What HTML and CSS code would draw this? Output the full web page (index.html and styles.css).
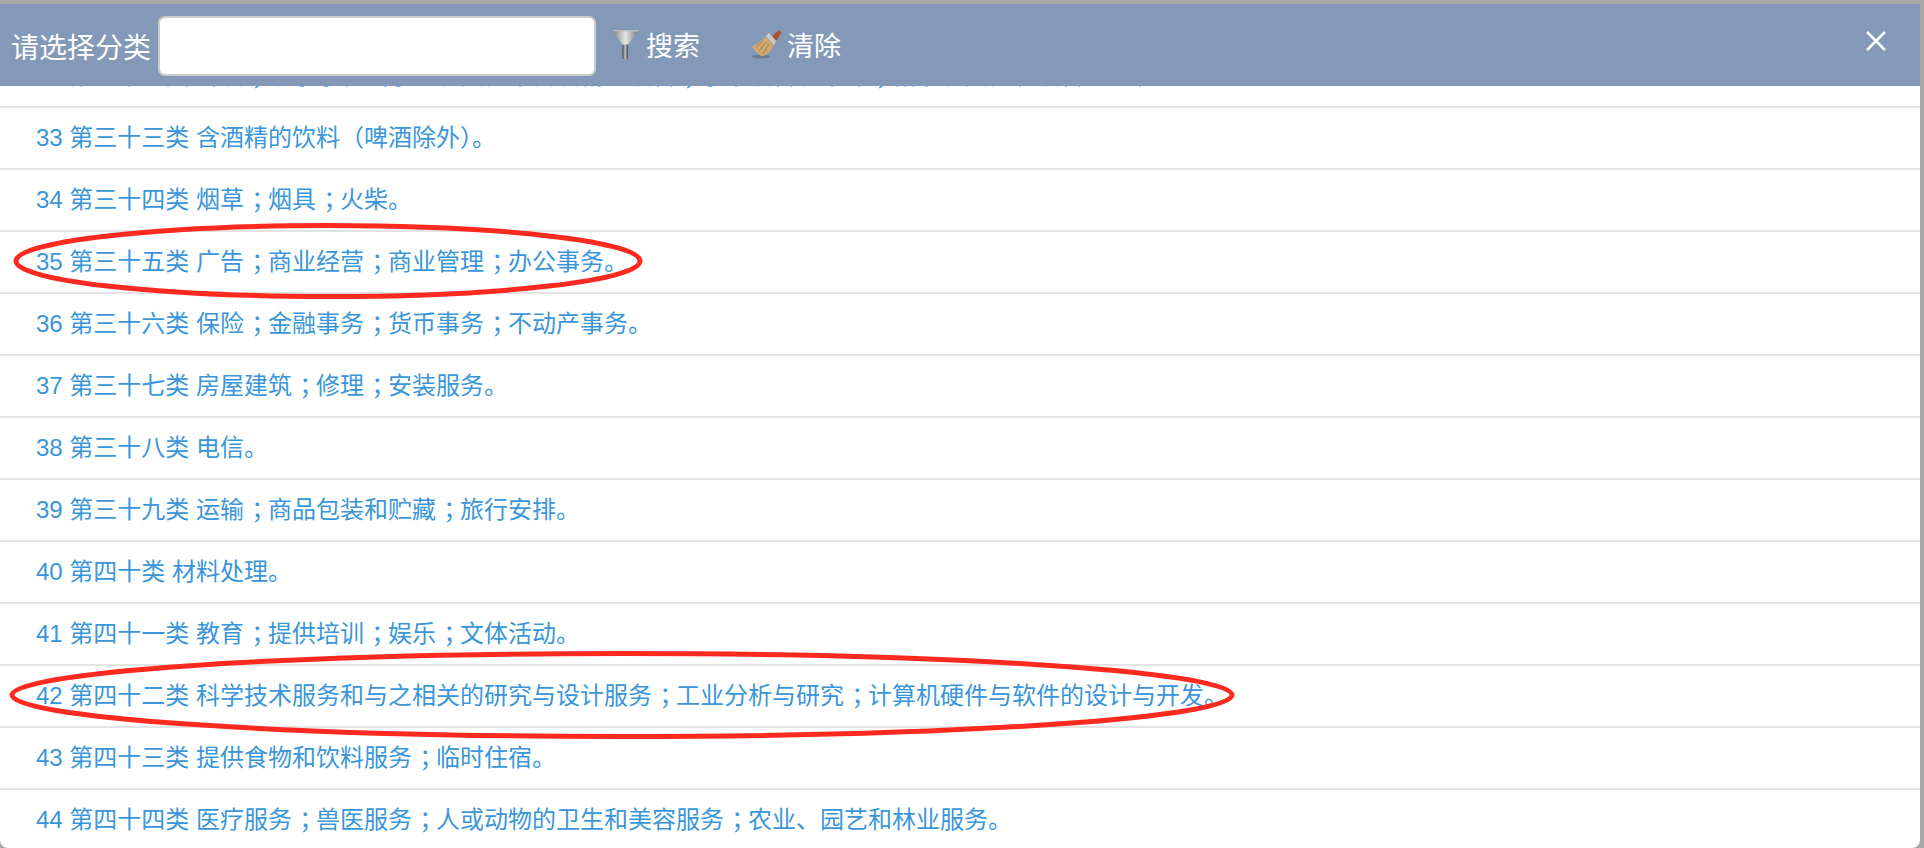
FILE: index.html
```html
<!DOCTYPE html>
<html lang="zh-CN">
<head>
    <meta charset="UTF-8">
    <title>请选择分类</title>
    <link rel="stylesheet" href="styles.css">
</head>
<body>

    <div class="modal">
        <div class="modal-header">
            <label class="search-label" for="searchBar">请选择分类</label>
            <input type="text" id="searchBar" class="search-input">
            <a class="tool-btn search-btn">
                <svg class="icon" width="28" height="31" viewBox="0 0 28 31">
                    <defs>
                        <linearGradient id="funnelTop" x1="0" y1="0" x2="1" y2="0">
                            <stop offset="0" stop-color="#7f8388"/>
                            <stop offset="0.5" stop-color="#e6e6e4"/>
                            <stop offset="1" stop-color="#787c82"/>
                        </linearGradient>
                        <linearGradient id="funnelStem" x1="0" y1="0" x2="1" y2="0">
                            <stop offset="0" stop-color="#3f444a"/>
                            <stop offset="0.5" stop-color="#c4c5c4"/>
                            <stop offset="1" stop-color="#3b4046"/>
                        </linearGradient>
                    </defs>
                    <path d="M11.500 14H17V30H11.500Z" fill="url(#funnelStem)"/>
                    <path d="M2 1.500H27L26 4L17 15.500H11.500L3 4Z" fill="url(#funnelTop)"/>
                    <path d="M2 1H27V2.500H2Z" fill="#b9bbbd"/>
                </svg>
                搜索
            </a>
            <a class="tool-btn clear-btn">
                <svg class="icon" width="33" height="29" viewBox="0 0 33 29">
                    <ellipse cx="12" cy="26.500" rx="9" ry="1.800" fill="#4d5a70" opacity="0.500"/>
                    <path d="M23 6L30 0L32.500 2.500L27 11Z" fill="#a9562f"/>
                    <path d="M17 6L20 3L27 11L25 15Z" fill="#c9cbc8"/>
                    <path d="M17 6L25 15C23 20 18 25 13 26.500C10 25 6 21 2 16C8 15 13 11 17 6Z" fill="#cda86e"/>
                    <path d="M14 11L7 17M17 12L10 21M20 14L14 24" stroke="#a8854e" stroke-width="1" fill="none"/>
                </svg>
                清除
            </a>
            <span class="close-btn">
                <svg width="20" height="20" viewBox="0 0 20 20">
                    <path d="M1 1L19 19M19 1L1 19" stroke="#fff" stroke-width="2.600"/>
                </svg>
            </span>
        </div>

        <div class="modal-body">
            <ul class="class-list">
                <li class="class-item">32 第三十二类 啤酒<span class="semi">；</span>矿泉水和汽水以及其他不含酒精的饮料<span class="semi">；</span>水果饮料及果汁<span class="semi">；</span>糖浆及其他制饮料用的制剂。</li>
                <li class="class-item">33 第三十三类 含酒精的饮料（啤酒除外）。</li>
                <li class="class-item">34 第三十四类 烟草<span class="semi">；</span>烟具<span class="semi">；</span>火柴。</li>
                <li class="class-item">35 第三十五类 广告<span class="semi">；</span>商业经营<span class="semi">；</span>商业管理<span class="semi">；</span>办公事务。</li>
                <li class="class-item">36 第三十六类 保险<span class="semi">；</span>金融事务<span class="semi">；</span>货币事务<span class="semi">；</span>不动产事务。</li>
                <li class="class-item">37 第三十七类 房屋建筑<span class="semi">；</span>修理<span class="semi">；</span>安装服务。</li>
                <li class="class-item">38 第三十八类 电信。</li>
                <li class="class-item">39 第三十九类 运输<span class="semi">；</span>商品包装和贮藏<span class="semi">；</span>旅行安排。</li>
                <li class="class-item">40 第四十类 材料处理。</li>
                <li class="class-item">41 第四十一类 教育<span class="semi">；</span>提供培训<span class="semi">；</span>娱乐<span class="semi">；</span>文体活动。</li>
                <li class="class-item">42 第四十二类 科学技术服务和与之相关的研究与设计服务<span class="semi">；</span>工业分析与研究<span class="semi">；</span>计算机硬件与软件的设计与开发。</li>
                <li class="class-item">43 第四十三类 提供食物和饮料服务<span class="semi">；</span>临时住宿。</li>
                <li class="class-item">44 第四十四类 医疗服务<span class="semi">；</span>兽医服务<span class="semi">；</span>人或动物的卫生和美容服务<span class="semi">；</span>农业、园艺和林业服务。</li>
            </ul>
        </div>

        <!-- red hand drawn marks on top of the list -->
        <svg class="marks" width="1920" height="844" viewBox="0 0 1920 844">
            <ellipse cx="328" cy="257" rx="312" ry="35.500" fill="none" stroke="#ff2a1f" stroke-width="5"/>
            <ellipse cx="622" cy="691" rx="610" ry="41.500" fill="none" stroke="#ff2a1f" stroke-width="5"/>
        </svg>
    </div>

</body>
</html>
```

FILE: styles.css
```css
html, body {
    height: 100%;
    margin: 0;
    overflow: hidden;
}
body {
    background-color: #a9a9a9;
    font-family: "Liberation Sans", "Noto Sans CJK SC", sans-serif;
}
.modal {
    position: relative;
    display: flex;
    flex-direction: column;
    width: 1920px;
    height: 844px;
    margin-top: 4px;
    background-color: #fff;
    border-radius: 0 0 8px 8px;
    overflow: hidden;
}
.modal-header {
    position: relative;
    z-index: 1;
    display: flex;
    align-items: center;
    flex: none;
    height: 82px;
    padding-left: 11px;
    background-color: #8499b8;
    color: #fff;
    font-size: 28px;
}
.search-label {
    width: 147px;
    margin-top: 2px;
}
.search-input {
    box-sizing: border-box;
    width: 438px;
    height: 60px;
    margin-top: 2px;
    border: 2px solid #ccc;
    border-radius: 7px;
    background-color: #fff;
    outline: none;
}
.tool-btn {
    display: flex;
    align-items: center;
    font-size: 27px;
    margin-bottom: 2px;
}
.search-btn {
    margin-left: 15px;
    gap: 7px;
}
.clear-btn {
    margin-left: 49px;
    gap: 5px;
}
.icon {
    filter: blur(0.4px);
}
.close-btn {
    display: flex;
    margin-left: auto;
    margin-right: 34px;
    margin-bottom: 8px;
}
.modal-body {
    flex: 1;
    overflow: hidden;
}
.class-list {
    list-style: none;
    margin: -40px 0 0;
    padding: 0;
}
.class-item {
    box-sizing: border-box;
    height: 62px;
    padding: 0 36px;
    border-bottom: 2px solid #e3e3e3;
    line-height: 59px;
    font-size: 24px;
    color: #3a96d8;
    white-space: nowrap;
}
/* the font keeps this mark at the left of its cell, the original has it centred */
.semi {
    padding-left: 0.3em;
    letter-spacing: -0.3em;
}
.marks {
    position: absolute;
    left: 0;
    top: 0;
    z-index: 2;
    pointer-events: none;
}
```
